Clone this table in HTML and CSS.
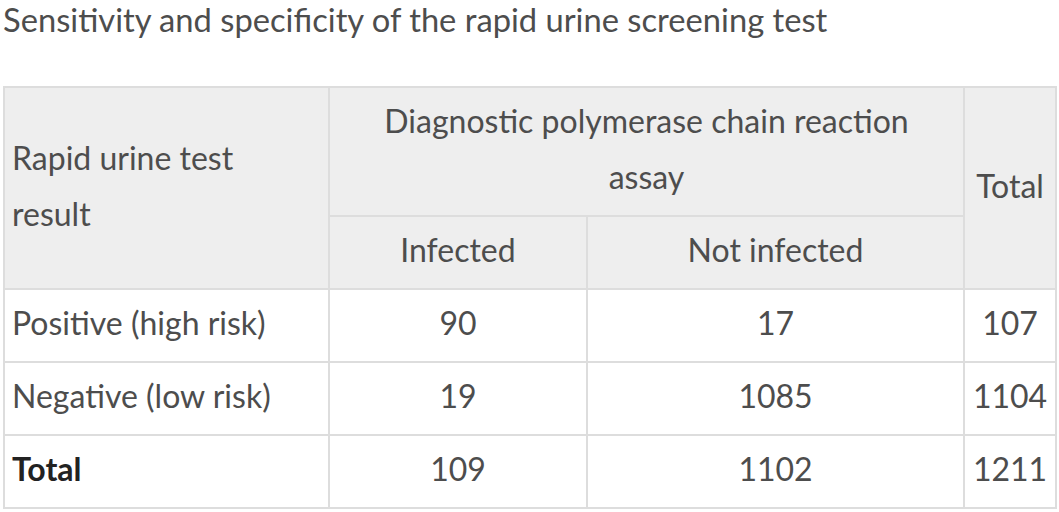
FILE: index.html
```html
<!DOCTYPE html>
<html lang="en">
<head>
<meta charset="utf-8">
<title>Sensitivity and specificity</title>
<link rel="stylesheet" href="styles.css">
</head>
<body>
<div class="page">
  <div class="caption">Sensitivity and specificity of the rapid urine screening test</div>
  <table class="data">
    <colgroup>
      <col class="c1"><col class="c2"><col class="c3"><col class="c4">
    </colgroup>
    <thead>
      <tr>
        <th rowspan="2" class="left">Rapid urine test<br>result</th>
        <th colspan="2">Diagnostic polymerase chain reaction<br>assay</th>
        <th rowspan="2">Total</th>
      </tr>
      <tr>
        <th>Infected</th>
        <th>Not infected</th>
      </tr>
    </thead>
    <tbody>
      <tr><td class="left">Positive (high risk)</td><td>90</td><td>17</td><td>107</td></tr>
      <tr><td class="left">Negative (low risk)</td><td>19</td><td>1085</td><td>1104</td></tr>
      <tr><td class="left strong">Total</td><td>109</td><td>1102</td><td>1211</td></tr>
    </tbody>
  </table>
</div>
</body>
</html>
```

FILE: styles.css
```css
html, body {
  margin: 0;
  padding: 0;
  background: #ffffff;
}

.page {
  padding: 0 3px;
  font-family: Lato, "Open Sans", sans-serif;
  color: #4d4d4d;
}

.caption {
  font-size: 32.7px;
  line-height: 39px;
  margin-bottom: 47px;
}

.data {
  border-collapse: collapse;
  table-layout: fixed;
  width: 1052px;
  font-size: 32px;
  line-height: 56px;
}

.c1 { width: 325px; }
.c2 { width: 258px; }
.c3 { width: 377px; }
.c4 { width: 92px; }

.data th,
.data td {
  border: 2px solid #dddddd;
  padding: 5px 6px 10px;
  text-align: center;
  vertical-align: middle;
  font-weight: normal;
  white-space: nowrap;
}

.data th {
  background: #eeeeee;
}

.data .left {
  text-align: left;
  padding-left: 7px;
}

.data .strong {
  font-weight: bold;
  color: #222222;
}
```
